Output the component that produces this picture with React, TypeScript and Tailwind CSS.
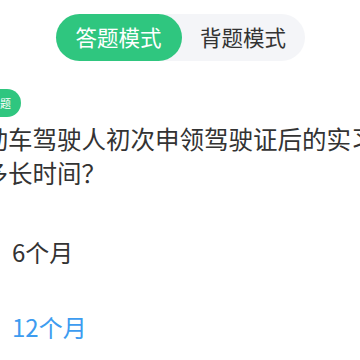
const OPTIONS = [
  { label: "6个月", active: false },
  { label: "12个月", active: true },
];

export default function App() {
  return (
    <div className="w-[360px] h-[360px] overflow-hidden bg-white font-['Noto_Sans_CJK_SC',sans-serif]">
      <div className="flex justify-center pt-[14px]">
        <div className="flex h-[47px] rounded-full bg-[#f4f5f8]">
          <button className="w-[126px] rounded-full bg-[#2fc67f] text-[21.5px] text-white">
            答题模式
          </button>
          <button className="w-[123px] text-[21.5px] text-[#333]">背题模式</button>
        </div>
      </div>

      <div className="ml-[-41px] w-[460px]">
        <div className="mt-[28px] ml-[9px] inline-flex h-[28px] items-center rounded-full bg-[#2fc67f] px-[10px] text-[11px] text-white">
          单选题
        </div>
        <p className="mt-[5px] text-[24.5px] leading-[34px] text-[#333]">
          机动车驾驶人初次申领驾驶证后的实习期是多长时间？
        </p>
        <ul className="mt-[24px]">
          {OPTIONS.map((o) => (
            <li
              key={o.label}
              className={`flex h-[75px] items-center pl-[53px] text-[24px] ${
                o.active ? "text-[#3d9cf0]" : "text-[#333]"
              }`}
            >
              {o.label}
            </li>
          ))}
        </ul>
      </div>
    </div>
  );
}
